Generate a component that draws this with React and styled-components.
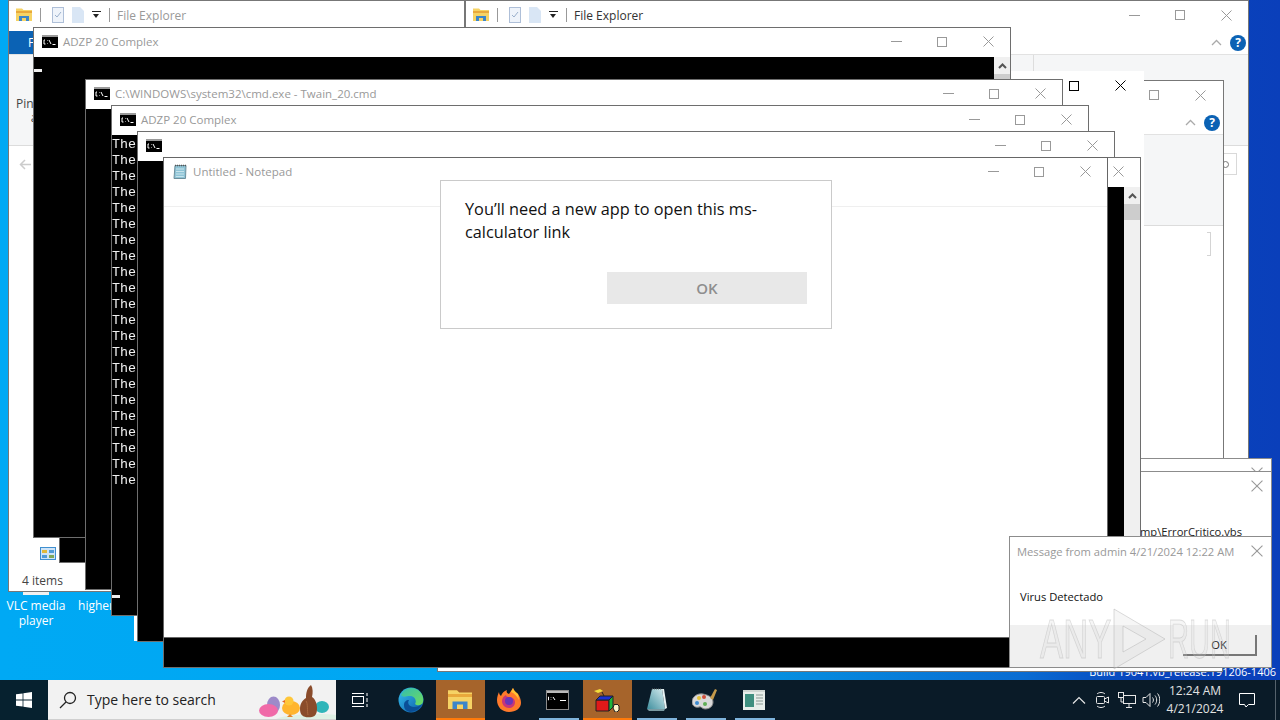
import React from "react";
import styled, { createGlobalStyle } from "styled-components";

const GlobalStyle = createGlobalStyle`
  html, body { margin: 0; padding: 0; width: 1280px; height: 720px; overflow: hidden; }
  body { font-family: "Open Sans", "Noto Sans", sans-serif; }
`;

const Screen = styled.div`
  width: 1280px;
  height: 720px;
  display: flex;
  flex-direction: column;
  overflow: hidden;
`;

const Canvas = styled.div`
  position: relative;
  flex: 1;
  overflow: hidden;
  background: linear-gradient(90deg, #00a9f4 0%, #00a6f2 35%, #0590e0 60%, #0a6cd2 80%, #0845bd 89%, #0a3fba 100%);
`;

const BuildText = styled.div`
  position: absolute;
  right: 4px;
  top: 664px;
  font-size: 11px;
  line-height: 15px;
  color: #fff;
  white-space: nowrap;
`;

const DesktopItem = styled.div`
  position: absolute;
  left: ${(p) => p.$x}px;
  top: 564px;
  width: 70px;
  display: flex;
  flex-direction: column;
  align-items: center;
  gap: 2px;
  font-size: 12px;
  line-height: 15px;
  color: #fff;
  text-align: center;
`;

const Win = styled.div`
  position: absolute;
  left: ${(p) => p.$x}px;
  top: ${(p) => p.$y}px;
  width: ${(p) => p.$w}px;
  height: ${(p) => p.$h}px;
  box-sizing: border-box;
  display: flex;
  flex-direction: column;
  overflow: hidden;
  background: ${(p) => p.$bg || "#fff"};
  border: 1px solid ${(p) => p.$edge || "#8c8c8c"};
`;

const TitleBar = styled.div`
  flex: none;
  box-sizing: border-box;
  height: ${(p) => p.$h || 29}px;
  display: flex;
  align-items: center;
  gap: ${(p) => p.$gap || 5}px;
  padding: 0 0 2px ${(p) => p.$pad || 8}px;
  background: #fff;
`;

const TitleText = styled.span`
  font-size: ${(p) => p.$size || 11.5}px;
  white-space: nowrap;
  color: ${(p) => (p.$dark ? "#333" : "#999")};
`;

const Controls = styled.div`
  margin-left: auto;
  margin-right: ${(p) => p.$r ?? -1}px;
  display: flex;
  flex: none;
`;

const CtrlBtn = styled.div`
  width: ${(p) => p.$w || 46}px;
  height: 26px;
  display: flex;
  align-items: center;
  justify-content: center;
  color: ${(p) => (p.$black ? "#000" : "#999")};
`;

const Console = styled.div`
  flex: 1;
  display: flex;
  min-height: 0;
  background: #000;
`;

const ConsoleText = styled.div`
  flex: 1;
  position: relative;
  padding-top: ${(p) => p.$top || 0}px;
  font-family: "Liberation Mono", monospace;
  font-size: 13.33px;
  line-height: 16px;
  color: #f2f2f2;
  white-space: pre;
  will-change: transform;
`;

const Cursor = styled.div`
  position: absolute;
  left: 0;
  top: ${(p) => p.$top}px;
  width: 8px;
  height: 3px;
  background: #eee;
`;

const ScrollBar = styled.div`
  flex: none;
  width: 16px;
  display: flex;
  flex-direction: column;
  align-items: center;
  background: #f0f0f0;
`;

const ScrollArrow = styled.div`
  height: 17px;
  display: flex;
  align-items: center;
  color: #555;
`;

const ScrollThumb = styled.div`
  width: 100%;
  height: 16px;
  background: #cdcdcd;
`;

const QuickIcons = styled.div`
  display: flex;
  align-items: center;
  gap: 8px;
`;

const Sep = styled.div`
  width: 1px;
  height: 14px;
  margin-right: 3px;
  background: #999;
`;

const Caret = styled.div`
  width: 9px;
  height: 8px;
  border-top: 1px solid #222;
  position: relative;
  &::after {
    content: "";
    position: absolute;
    left: 1px;
    top: 2px;
    border: 3.5px solid transparent;
    border-top: 4px solid #222;
    border-bottom: 0;
  }
`;

const TabRow = styled.div`
  flex: none;
  height: 23px;
  display: flex;
  align-items: center;
`;

const FileTab = styled.div`
  width: 50px;
  height: 23px;
  padding-left: 19px;
  box-sizing: border-box;
  font-size: 12px;
  line-height: 23px;
  color: #fff;
  background: #0b62b4;
`;

const HelpGroup = styled.div`
  margin-left: auto;
  margin-right: ${(p) => p.$r || 2}px;
  display: flex;
  align-items: center;
  gap: 8px;
  color: #aaa;
`;

const HelpDot = styled.div`
  width: 16px;
  height: 16px;
  border-radius: 50%;
  background: #0b62b4;
  color: #fff;
  font-size: 12px;
  font-weight: 700;
  line-height: 16px;
  text-align: center;
`;

const Ribbon = styled.div`
  flex: none;
  height: 92px;
  display: flex;
  padding-top: 42px;
  box-sizing: border-box;
  background: #f5f6f7;
  border-top: 1px solid #e2e2e2;
  border-bottom: 1px solid #dcdcdc;
`;

const RibbonLabel = styled.div`
  width: 66px;
  margin-left: 7px;
  font-size: 12px;
  line-height: 14px;
  text-align: center;
  white-space: nowrap;
  color: #444;
`;

const RibbonDivider = styled.div`
  width: 1px;
  height: 17px;
  margin: -42px 214px 0 auto;
  background: #ddd;
`;

const NavBar = styled.div`
  flex: none;
  height: 36px;
  display: flex;
  align-items: center;
  justify-content: ${(p) => (p.$end ? "flex-end" : "flex-start")};
  padding: 0 10px;
  color: #ccc;
`;

const SearchStub = styled.div`
  width: 15px;
  height: 20px;
  margin-right: 1px;
  display: flex;
  align-items: center;
  border: 1px solid #d9d9d9;
  border-left: 0;
  &::before {
    content: "";
    width: 5px;
    height: 5px;
    margin-left: 1px;
    border: 1px solid #777;
    border-radius: 50%;
  }
`;

const BracketStub = styled.div`
  width: 3px;
  height: 22px;
  margin-right: 2px;
  border: 1px solid #d4d4d4;
  border-left: 0;
`;

const FileArea = styled.div`
  flex: 1;
  display: flex;
  align-items: flex-end;
  padding: 0 0 8px 31px;
`;

const StatusRow = styled.div`
  flex: none;
  height: 23px;
  padding-left: 13px;
  font-size: 12px;
  line-height: 26px;
  color: #444;
`;

const NotepadMenu = styled.div`
  flex: none;
  height: 19px;
  border-bottom: 1px solid #efefef;
`;

const Paper = styled.div`
  flex: 1;
  background: #fff;
`;

const Prompt = styled.div`
  position: absolute;
  left: 440px;
  top: 180px;
  width: 392px;
  height: 149px;
  box-sizing: border-box;
  padding: 17px 24px 0;
  background: #fff;
  border: 1px solid #cacaca;
`;

const PromptText = styled.div`
  font-size: 16.3px;
  line-height: 23px;
  color: #111;
`;

const PromptBtn = styled.div`
  width: 200px;
  height: 32px;
  margin: 28px 0 0 142px;
  background: #e8e8e8;
  font-size: 15px;
  font-weight: 600;
  line-height: 32px;
  text-align: center;
  color: #8e8e8e;
`;

const DialogBody = styled.div`
  flex: 1;
  display: flex;
  align-items: flex-end;
  justify-content: flex-end;
  padding: 0 29px 11px 0;
  font-size: 11.2px;
  line-height: 15px;
  color: #222;
  white-space: nowrap;
`;

const MsgText = styled.div`
  flex: 1;
  padding: 22px 0 0 10px;
  font-size: 11.2px;
  color: #111;
`;

const MsgFoot = styled.div`
  flex: none;
  height: 42px;
  display: flex;
  align-items: flex-start;
  justify-content: flex-end;
  padding: 10px 14px 0 0;
  box-sizing: border-box;
  background: #f0f0f0;
`;

const MsgOk = styled.div`
  width: 74px;
  height: 21px;
  box-sizing: border-box;
  border-right: 2px solid #777;
  border-bottom: 2px solid #777;
  font-size: 11.2px;
  line-height: 20px;
  text-align: center;
  color: #222;
`;

const Watermark = styled.div`
  position: absolute;
  left: 1040px;
  top: 607px;
  display: flex;
  align-items: center;
  font-family: "Liberation Sans", sans-serif;
  font-size: 56px;
  line-height: 62px;
  color: rgba(215, 215, 215, 0.22);
  -webkit-text-stroke: 1px rgba(175, 175, 175, 0.4);
  pointer-events: none;
`;

const MarkWord = styled.span`
  display: inline-block;
  width: ${(p) => p.$w}px;
  transform: scaleX(${(p) => p.$sx});
  transform-origin: left center;
`;

const Taskbar = styled.div`
  flex: none;
  height: 40px;
  display: flex;
  align-items: stretch;
  background: #0a1b28;
`;

const StartBtn = styled.div`
  width: 48px;
  display: flex;
  align-items: center;
  justify-content: center;
  background: #06212f;
`;

const SearchBox = styled.div`
  width: 288px;
  box-sizing: border-box;
  display: flex;
  align-items: center;
  gap: 10px;
  padding-left: 11px;
  overflow: hidden;
  background: #f2f2f2;
  border-bottom: 1px solid #cfcfcf;
  font-size: 14px;
  color: #222;
`;

const SearchArt = styled.div`
  margin-left: auto;
  align-self: flex-end;
  display: flex;
`;

const TaskItem = styled.div`
  position: relative;
  width: ${(p) => p.$w || 49}px;
  box-sizing: border-box;
  padding-right: ${(p) => p.$pr ?? 2}px;
  flex: none;
  display: flex;
  align-items: center;
  justify-content: center;
  background: ${(p) => (p.$state === "active" ? "#a6642b" : "transparent")};
  &::after {
    content: "";
    display: ${(p) => (p.$state ? "block" : "none")};
    position: absolute;
    bottom: 0;
    left: ${(p) => (p.$state === "active" ? 0 : 5)}px;
    right: ${(p) => (p.$state === "active" ? 0 : 4)}px;
    height: 2px;
    background: ${(p) => (p.$state === "active" ? "#ff7a0a" : "#7fb4dc")};
  }
`;

const Tray = styled.div`
  margin-left: auto;
  display: flex;
  align-items: center;
  color: #e6e6e6;
`;

const TraySlot = styled.div`
  width: ${(p) => p.$w || 24}px;
  height: 40px;
  display: flex;
  align-items: center;
  justify-content: center;
`;

const Clock = styled.div`
  width: 64px;
  font-size: 12px;
  line-height: 18px;
  text-align: center;
  color: #e2e2e2;
`;

const ShowDesktop = styled.div`
  width: 13px;
  height: 40px;
  position: relative;
  &::after {
    content: "";
    position: absolute;
    left: 8px;
    top: 0;
    bottom: 0;
    width: 1px;
    background: #55626c;
  }
`;

/* window buttons */
const MinIcon = () => (
  <svg width="11" height="11" viewBox="0 0 11 11">
    <path d="M0 5.5h11" stroke="currentColor" />
  </svg>
);
const MaxIcon = () => (
  <svg width="10" height="10" viewBox="0 0 10 10">
    <rect x=".5" y=".5" width="9" height="9" fill="none" stroke="currentColor" />
  </svg>
);
const CloseIcon = ({ size = 11 }) => (
  <svg width={size} height={size} viewBox="0 0 11 11">
    <path d="M.5.5l10 10M10.5.5l-10 10" stroke="currentColor" />
  </svg>
);

const WinControls = ({ black, right }) => (
  <Controls $r={right}>
    <CtrlBtn $black={black}>
      <MinIcon />
    </CtrlBtn>
    <CtrlBtn $black={black}>
      <MaxIcon />
    </CtrlBtn>
    <CtrlBtn $black={black}>
      <CloseIcon />
    </CtrlBtn>
  </Controls>
);

const CloseOnly = () => (
  <Controls>
    <CtrlBtn $w={30}>
      <CloseIcon size={12} />
    </CtrlBtn>
  </Controls>
);

const CmdGlyph = () => (
  <svg width="16" height="13" viewBox="0 0 16 13">
    <rect width="16" height="13" fill="#000" />
    <rect width="16" height="2" fill="#9a9a9a" />
    <path d="M3 5H2v4h1.500M5.500 5.500v.5M5.500 8v.5M7 5l2 4M10.500 9.500h3" stroke="#fff" fill="none" />
  </svg>
);

const NotepadGlyph = () => (
  <svg width="16" height="16" viewBox="0 0 16 16">
    <path d="M3 1.500h11l-.5 13H2z" fill="#8fc4d6" stroke="#6d8f9c" />
    <path d="M4 5h8M4 7.500h8M4 10h8M3.800 12.500h8" stroke="#c8e4ec" />
    <path d="M3 1.500h11" stroke="#555" strokeDasharray="1 1" strokeWidth="1.500" />
  </svg>
);

const NotepadTaskGlyph = () => (
  <svg width="24" height="24" viewBox="0 0 24 24">
    <defs>
      <linearGradient id="padFace" x1="0" y1="1" x2="1" y2="0">
        <stop offset="0" stopColor="#3f8f9e" />
        <stop offset="1" stopColor="#d8eef1" />
      </linearGradient>
    </defs>
    <path d="M8 1h10l3 20H3z" fill="url(#padFace)" />
    <path d="M18 1l3 20 2-1-3-19z" fill="#e9f3f4" />
    <path d="M3 21h18l-1 2H5z" fill="#7a9aa2" />
    <path d="M8 1h10" stroke="#666" strokeDasharray="1 1" />
  </svg>
);

const FolderGlyph = ({ size = 16 }) => (
  <svg width={size} height={size} viewBox="0 0 16 16">
    <path d="M0 3V1.500h6L7.500 3H16v11H0z" fill="#f6d365" />
    <rect y="4" width="16" height="2" fill="#e9a93b" />
    <rect x="3" y="9" width="10" height="5" fill="#3c86c9" />
    <rect x="6" y="11" width="4" height="3" fill="#f6d365" />
  </svg>
);

const CheckDocGlyph = () => (
  <svg width="12" height="16" viewBox="0 0 12 16">
    <rect x=".5" y=".5" width="11" height="15" fill="#eef3fa" stroke="#aebfd8" />
    <path d="M3 8l2 2 4-5" fill="none" stroke="#9ab0cc" />
  </svg>
);

const DocGlyph = () => (
  <svg width="12" height="16" viewBox="0 0 12 16">
    <path d="M0 0h8l4 4v12H0z" fill="#d9e6f5" />
  </svg>
);

const QuickBar = () => (
  <QuickIcons>
    <FolderGlyph />
    <Sep />
    <CheckDocGlyph />
    <DocGlyph />
    <Caret />
    <Sep />
  </QuickIcons>
);

const ViewGlyph = () => (
  <svg width="16" height="13" viewBox="0 0 16 13">
    <rect x=".5" y=".5" width="15" height="12" fill="#cfe4f7" stroke="#3f8fd0" />
    <rect x="2" y="3" width="5" height="3" fill="#e0b93c" />
    <rect x="9" y="3" width="5" height="3" fill="#4f9bd9" />
    <rect x="2" y="8" width="5" height="3" fill="#4f9bd9" />
    <rect x="9" y="8" width="5" height="3" fill="#7fa85a" />
  </svg>
);

/* taskbar drawings */
const StartGlyph = () => (
  <svg width="16" height="16" viewBox="0 0 16 16">
    <path d="M0 2.300l6.600-.9v6.200H0zM7.400 1.300L16 0v7.600H7.400zM0 8.400h6.600v6.200L0 13.700zM7.400 8.400H16V16l-8.600-1.300z" fill="#fff" />
  </svg>
);

const SearchGlyph = () => (
  <svg width="18" height="18" viewBox="0 0 18 18" fill="none" stroke="#222" strokeWidth="1.300">
    <circle cx="11" cy="7" r="5.500" />
    <path d="M7 11l-6 6" />
  </svg>
);

const EasterArt = () => (
  <svg width="78" height="38" viewBox="0 0 78 38">
    <path d="M18 38c10-5 45-6 60-4v4z" fill="#dff0e4" />
    <ellipse cx="15.500" cy="24" rx="6.500" ry="8.500" fill="#9d8ac9" />
    <ellipse cx="10.500" cy="29.500" rx="9.500" ry="6.500" fill="#f06aa8" />
    <ellipse cx="33" cy="27" rx="9" ry="7" fill="#ffb52e" />
    <circle cx="31" cy="20" r="4.500" fill="#ffc73a" />
    <path d="M27 19l-3 1.500 3 1.500z" fill="#e2662a" />
    <path d="M32 33l3 3h-6z" fill="#e2862a" />
    <ellipse cx="64" cy="26" rx="7" ry="6" fill="#2fb5b9" />
    <path d="M54 36c-8 1-12-1-12-8 0-6 3-9 6-11 0-5 1-10 5-13 2 3 2 8 1 12 3 2 5 6 5 11 0 5-1 8-5 9z" fill="#8a4c2b" />
    <path d="M48 20c2 2 1 10 2 14" stroke="#a9683f" fill="none" />
  </svg>
);

const TaskViewGlyph = () => (
  <svg width="18" height="18" viewBox="0 0 18 18" fill="none" stroke="#fff">
    <rect x="1.500" y="5.500" width="11" height="7" />
    <path d="M1 2.500h12M1 15.500h12M16 2v3M16 7v4M16 13v3" />
  </svg>
);

const EdgeGlyph = () => (
  <svg width="26" height="26" viewBox="0 0 26 26">
    <defs>
      <linearGradient id="edgeA" x1="0" y1="0" x2="1" y2="1">
        <stop offset="0" stopColor="#35c1f1" />
        <stop offset="1" stopColor="#0c59a4" />
      </linearGradient>
      <linearGradient id="edgeB" x1="0" y1="0" x2="1" y2="1">
        <stop offset="0" stopColor="#33bdaf" />
        <stop offset="1" stopColor="#6fdc5e" />
      </linearGradient>
    </defs>
    <circle cx="13" cy="13" r="12.500" fill="url(#edgeA)" />
    <path d="M3 8c3-7 11-9 17-5 4 3 6 7 5 12-1 4-6 4-8 2 2-3 0-8-5-8-4 0-7 2-9-1z" fill="url(#edgeB)" />
    <path d="M11 13c-2 3 0 7 5 7 3 0 6-1 8-3-2 5-7 8-12 8-4-1-6-3-6-7 0-3 2-5 5-5z" fill="#0a4e96" />
  </svg>
);

const FirefoxGlyph = () => (
  <svg width="24" height="26" viewBox="0 0 24 26">
    <path d="M12 25C5 25 0 20 0 13c0-3 1-6 2-8 0 2 1 3 2 4 1-3 3-5 6-6-1 2 0 3 2 4l4-6c1 3 3 4 5 6 2 3 3 6 3 9 0 5-5 9-12 9z" fill="#ff7a2b" />
    <path d="M16 1c1 3 3 4 5 6l1 6c-2-4-5-7-8-8z" fill="#ffc233" />
    <path d="M12 21c-4 0-7-3-7-7 0-3 2-5 4-6 0 1 1 2 3 2 3 0 6 2 6 5 0 4-3 6-6 6z" fill="#c7367a" />
    <circle cx="12" cy="14" r="4" fill="#6a35b8" />
  </svg>
);

const CmdTaskGlyph = () => (
  <svg width="23" height="20" viewBox="0 0 23 20">
    <rect x=".5" y=".5" width="22" height="19" fill="#000" stroke="#8c8c8c" />
    <rect x="1" y="1" width="21" height="2" fill="#bbb" />
    <path d="M3 7H2.500v3H3M5 7v.5M5 9.500v.5M7 7l2 3M14 10.500h6" stroke="#fff" fill="none" />
  </svg>
);

const CubeGlyph = () => (
  <svg width="26" height="24" viewBox="0 0 26 24">
    <path d="M0 3l6-2 3 2-5 2z" fill="#f3dc3c" />
    <path d="M8 4l3 6" stroke="#222" />
    <path d="M2 12h13v11H2z" fill="#e01919" stroke="#222" />
    <path d="M2 12l4-4h13l-4 4z" fill="#1c2fd4" stroke="#222" />
    <path d="M15 12l4-4v11l-4 4z" fill="#1db53a" stroke="#222" />
    <path d="M20 17l1-1 1 1 1-1 2 2v4l-2 2h-2l-2-4z" fill="#fff4c8" stroke="#222" />
  </svg>
);

const PaintGlyph = () => (
  <svg width="25" height="24" viewBox="0 0 25 24">
    <path d="M11 6C5 5 0 9 0 14c0 4 4 6 7 5 2-1 3 2 6 2 5 0 8-3 8-7 0-5-5-7-10-8z" fill="#d9d9d9" stroke="#888" />
    <path d="M18 10l5-9 2 1-4 10z" fill="#c49a4b" />
    <circle cx="7" cy="10" r="2" fill="#e5c23a" />
    <circle cx="5" cy="15" r="2" fill="#3d8bd0" />
    <circle cx="12" cy="9" r="2" fill="#d04f3d" />
    <circle cx="13" cy="16" r="2" fill="#5fae55" />
  </svg>
);

const ArticleGlyph = () => (
  <svg width="22" height="20" viewBox="0 0 22 20">
    <rect width="22" height="20" fill="#e8eeea" />
    <rect x="2" y="4" width="9" height="13" fill="#3f8f7f" />
    <path d="M13 5h7M13 8h7M13 11h7M13 14h7" stroke="#8a9a94" />
    <rect y="0" width="22" height="2" fill="#cfd6d2" />
  </svg>
);

const MeetGlyph = () => (
  <svg width="16" height="18" viewBox="0 0 16 18" fill="none" stroke="currentColor">
    <rect x="1.500" y="5.500" width="8" height="7" rx="1" />
    <path d="M9.500 8l4-2v6l-4-2M2 3c2-2 6-2 8 0M2 15c2 2 6 2 8 0" />
  </svg>
);

const NetworkGlyph = () => (
  <svg width="18" height="16" viewBox="0 0 18 16" fill="none" stroke="currentColor">
    <rect x="5.500" y="3.500" width="12" height="8" />
    <path d="M11 12v3M8 15.500h6" />
    <rect x=".5" y=".5" width="5" height="5" fill="#0a1b28" />
    <path d="M3 6v4h3" />
  </svg>
);

const VolumeGlyph = () => (
  <svg width="18" height="16" viewBox="0 0 18 16" fill="none" stroke="currentColor">
    <path d="M1 5.500h3l4-4v13l-4-4H1z" />
    <path d="M10.500 5.500c1.200 1.500 1.200 3.500 0 5M13 3.500c2.200 2.500 2.200 6.500 0 9M15.500 1.500c3 3.500 3 9.500 0 13" />
  </svg>
);

const NoticeGlyph = () => (
  <svg width="18" height="16" viewBox="0 0 18 16" fill="none" stroke="#fff">
    <path d="M1.500 1.500h15v11h-6L8 15l-1.500-2.500h-5z" />
  </svg>
);

const PlayMark = () => (
  <svg width="58" height="64" viewBox="0 0 58 64" fill="rgba(215,215,215,.22)" stroke="rgba(175,175,175,.45)">
    <path fillRule="evenodd" d="M4 2l51 30L4 62zM13 19v26l23-13z" />
  </svg>
);

const theLines = Array.from({ length: 22 }, () => "The").join("\n");

const CmdWindow = ({ x, y, title, children, scroll, top }) => (
  <Win $x={x} $y={y} $w={978} $h={511} $edge="#6e6e6e">
    <TitleBar>
      <CmdGlyph />
      {title && <TitleText>{title}</TitleText>}
      <WinControls />
    </TitleBar>
    <Console>
      <ConsoleText $top={top}>{children}</ConsoleText>
      {scroll && (
        <ScrollBar>
          <ScrollArrow>
            <svg width="9" height="6" viewBox="0 0 9 6" fill="none" stroke="currentColor" strokeWidth="2">
              <path d="M1 5l3.500-3.500L8 5" />
            </svg>
          </ScrollArrow>
          <ScrollThumb />
        </ScrollBar>
      )}
    </Console>
  </Win>
);

const Explorer = ({ x, y, w, h, dark, bare, right, children }) => (
  <Win $x={x} $y={y} $w={w} $h={h} $edge="#777">
    <TitleBar $pad={7} $gap={4} $h={30}>
      <QuickBar />
      <TitleText $size={12} $dark={dark}>File Explorer</TitleText>
      {!bare && <WinControls right={right} />}
    </TitleBar>
    {children}
  </Win>
);

const HelpButton = ({ right }) => (
  <HelpGroup $r={right}>
    <svg width="11" height="7" viewBox="0 0 11 7" fill="none" stroke="currentColor" strokeWidth="1.300">
      <path d="M1 6l4.500-4.500L10 6" />
    </svg>
    <HelpDot>?</HelpDot>
  </HelpGroup>
);

export default function App() {
  return (
    <>
      <GlobalStyle />
      <Screen>
        <Canvas>
          <BuildText>Build 19041.vb_release.191206-1406</BuildText>
          <DesktopItem $x={1}>
            <svg width="32" height="32" viewBox="0 0 32 32">
              <path d="M12 2h8l7 26H5z" fill="#e8862a" />
              <path d="M3 27h26v4H3z" fill="#f1f1f1" />
            </svg>
            <span>VLC media player</span>
          </DesktopItem>
          <DesktopItem $x={61}>
            <svg width="32" height="32" viewBox="0 0 32 32" />
            <span>higher</span>
          </DesktopItem>

          <Explorer x={8} y={0} w={457} h={592} bare>
            <TabRow>
              <FileTab>File</FileTab>
            </TabRow>
            <Ribbon>
              <RibbonLabel>
                Pin to Quick
                <br />
                access
              </RibbonLabel>
            </Ribbon>
            <NavBar>
              <svg width="13" height="11" viewBox="0 0 13 11" fill="none" stroke="currentColor" strokeWidth="1.500">
                <path d="M12 5.500H2M6 1L1.500 5.500 6 10" />
              </svg>
            </NavBar>
            <FileArea>
              <ViewGlyph />
            </FileArea>
            <StatusRow>4 items</StatusRow>
          </Explorer>

          <Explorer x={465} y={0} w={784} h={660} dark>
            <TabRow>
              <HelpButton />
            </TabRow>
            <Ribbon>
              <RibbonDivider />
            </Ribbon>
            <NavBar $end>
              <SearchStub />
            </NavBar>
          </Explorer>

          <Explorer x={320} y={80} w={904} h={430} right={0}>
            <TabRow>
              <HelpButton right={3} />
            </TabRow>
            <Ribbon />
            <NavBar $end>
              <BracketStub />
            </NavBar>
          </Explorer>

          <Win $x={134} $y={71} $w={1010} $h={570} $edge="#fff">
            <TitleBar>
              <WinControls black right={0} />
            </TitleBar>
          </Win>
          <Win $x={437} $y={620} $w={786} $h={52} $edge="#777" />

          <Win $x={1100} $y={458} $w={172} $h={90}>
            <TitleBar>
              <CloseOnly />
            </TitleBar>
          </Win>
          <Win $x={1100} $y={471} $w={172} $h={80}>
            <TitleBar>
              <CloseOnly />
            </TitleBar>
            <DialogBody>Temp\ErrorCritico.vbs</DialogBody>
          </Win>

          <Win $x={59} $y={300} $w={600} $h={263} $edge="#6e6e6e" $bg="#000" />
          <CmdWindow x={33} y={27} title="ADZP 20 Complex" scroll>
            <Cursor $top={12} />
          </CmdWindow>
          <CmdWindow x={85} y={79} title="C:\WINDOWS\system32\cmd.exe - Twain_20.cmd" />
          <CmdWindow x={111} y={105} title="ADZP 20 Complex" top={2}>
            {theLines}
            <Cursor $top={460} />
          </CmdWindow>
          <CmdWindow x={137} y={131} />
          <CmdWindow x={163} y={157} scroll />

          <Win $x={163} $y={157} $w={945} $h={481} $edge="#666">
            <TitleBar>
              <NotepadGlyph />
              <TitleText>Untitled - Notepad</TitleText>
              <WinControls />
            </TitleBar>
            <NotepadMenu />
            <Paper />
          </Win>

          <Prompt>
            <PromptText>You’ll need a new app to open this ms-calculator link</PromptText>
            <PromptBtn>OK</PromptBtn>
          </Prompt>

          <Win $x={1009} $y={536} $w={263} $h={132}>
            <TitleBar $h={30} $pad={7}>
              <TitleText $size={11.2}>Message from admin 4/21/2024 12:22 AM</TitleText>
              <CloseOnly />
            </TitleBar>
            <MsgText>Virus Detectado</MsgText>
            <MsgFoot>
              <MsgOk>OK</MsgOk>
            </MsgFoot>
          </Win>

          <Watermark>
            <MarkWord $w={70} $sx={0.62}>ANY</MarkWord>
            <PlayMark />
            <MarkWord $w={62} $sx={0.52}>RUN</MarkWord>
          </Watermark>
        </Canvas>

        <Taskbar>
          <StartBtn>
            <StartGlyph />
          </StartBtn>
          <SearchBox>
            <SearchGlyph />
            <span>Type here to search</span>
            <SearchArt>
              <EasterArt />
            </SearchArt>
          </SearchBox>
          <TaskItem $w={51} $pr={3}>
            <TaskViewGlyph />
          </TaskItem>
          <TaskItem>
            <EdgeGlyph />
          </TaskItem>
          <TaskItem $state="active">
            <FolderGlyph size={24} />
          </TaskItem>
          <TaskItem>
            <FirefoxGlyph />
          </TaskItem>
          <TaskItem $state="open">
            <CmdTaskGlyph />
          </TaskItem>
          <TaskItem $state="active">
            <CubeGlyph />
          </TaskItem>
          <TaskItem $state="open">
            <NotepadTaskGlyph />
          </TaskItem>
          <TaskItem $state="open">
            <PaintGlyph />
          </TaskItem>
          <TaskItem $state="open">
            <ArticleGlyph />
          </TaskItem>
          <Tray>
            <TraySlot>
              <svg width="14" height="8" viewBox="0 0 14 8" fill="none" stroke="currentColor" strokeWidth="1.200">
                <path d="M1 7.500L7 1.500l6 6" />
              </svg>
            </TraySlot>
            <TraySlot>
              <MeetGlyph />
            </TraySlot>
            <TraySlot>
              <NetworkGlyph />
            </TraySlot>
            <TraySlot>
              <VolumeGlyph />
            </TraySlot>
            <Clock>
              12:24 AM
              <br />
              4/21/2024
            </Clock>
            <TraySlot $w={40}>
              <NoticeGlyph />
            </TraySlot>
            <ShowDesktop />
          </Tray>
        </Taskbar>
      </Screen>
    </>
  );
}
